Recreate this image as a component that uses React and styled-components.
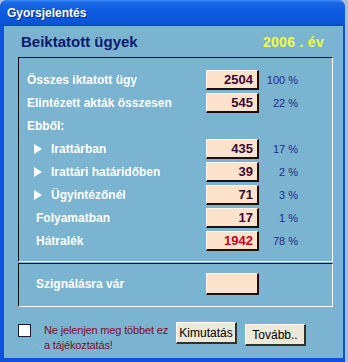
import React from 'react';
import styled, { createGlobalStyle } from 'styled-components';

const GlobalStyle = createGlobalStyle`
  html, body {
    margin: 0;
    padding: 0;
    background: #a9bddc;
  }
  body {
    font-family: "Liberation Sans", Arial, sans-serif;
  }
`;

const Window = styled.div`
  width: 345px;
  height: 362px;
  box-sizing: border-box;
  display: flex;
  flex-direction: column;
  background: #0c52dc;
  border-radius: 7px 7px 0 0;
  overflow: hidden;
`;

const TitleBar = styled.div`
  height: 26px;
  flex: none;
  display: flex;
  align-items: center;
  padding-left: 7px;
  background: linear-gradient(#3b8bf7 0%, #1766e4 12%, #0c5ade 50%, #0a55d8 88%, #0848c6 100%);
  color: #fff;
  font-weight: bold;
  font-size: 12px;
  text-shadow: 1px 1px 0 #0a2f8a;
`;

const Body = styled.div`
  flex: 1;
  margin: 0 2px 4px 4px;
  background: #7ab4d0;
  display: flex;
  flex-direction: column;
`;

const Header = styled.div`
  height: 31px;
  display: flex;
  align-items: center;
  justify-content: space-between;
  padding: 0 19px 0 17px;
`;

const Caption = styled.div`
  color: #0c1a6e;
  font-weight: bold;
  font-size: 15px;
`;

const Year = styled.div`
  color: #f0ff3c;
  font-size: 14px;
  font-weight: bold;
  letter-spacing: 0.3px;
`;

const Frame = styled.div`
  margin: 0 10px 0 14px;
  height: ${p => p.h}px;
  box-sizing: border-box;
  border-top: 1px solid #101018;
  border-left: 1px solid #101018;
  border-right: 1px solid #fff;
  border-bottom: 1px solid #fff;
  padding: ${p => p.pad};
  display: flex;
  flex-direction: column;
  gap: 3px;
  & + & {
    margin-top: 1px;
  }
`;

const Row = styled.div`
  display: grid;
  grid-template-columns: 179px 53px 39px;
  height: 20px;
  align-items: center;
`;

const Label = styled.div`
  display: flex;
  align-items: center;
  padding-left: ${p => p.indent || 0}px;
  color: #fff;
  font-weight: bold;
  font-size: 12px;
`;

const Arrow = styled.svg`
  width: 8px;
  height: 10px;
  margin-right: 9px;
`;

const Box = styled.div`
  height: ${p => p.tall ? 22 : 20}px;
  box-sizing: border-box;
  background: #fde3cc;
  border-top: 1px solid #fff6ee;
  border-left: 1px solid #fff6ee;
  border-right: 2px solid #1a1010;
  border-bottom: 2px solid #1a1010;
  text-align: right;
  padding-right: 4px;
  font-weight: bold;
  font-size: 13px;
  line-height: 18px;
  color: ${p => (p.alert ? '#c8001c' : '#3c0636')};
`;

const Pct = styled.div`
  text-align: right;
  font-size: 11px;
  color: #1b2a84;
`;

const Footer = styled.div`
  flex: 1;
  display: flex;
  align-items: flex-start;
  padding: 16px 0 0 14px;
`;

const Check = styled.div`
  width: 11px;
  height: 11px;
  margin-top: 1px;
  background: #fff;
  border: 1px solid #1a1a2a;
  flex: none;
`;

const Dots = styled.div`
  display: flex;
  flex-direction: column;
  gap: 13px;
  padding: 6px 0 0 4px;
  width: 9px;
  & span {
    width: 2px;
    height: 2px;
    background: #9ab0c8;
  }
`;

const Note = styled.div`
  color: #800a28;
  font-size: 11px;
  letter-spacing: -0.15px;
  line-height: 15px;
  width: 128px;
  white-space: nowrap;
`;

const Button = styled.button`
  margin-left: ${p => p.ml}px;
  margin-top: ${p => p.mt}px;
  width: 61px;
  height: 22px;
  padding: 0;
  background: #ece9d8;
  border-top: 1px solid #fff;
  border-left: 1px solid #fff;
  border-right: 2px solid #303030;
  border-bottom: 2px solid #303030;
  font-family: "Liberation Sans", Arial, sans-serif;
  font-size: 12px;
  color: #000;
`;

const rows = [
  { label: 'Összes iktatott ügy', value: '2504', pct: '100 %' },
  { label: 'Elintézett akták összesen', value: '545', pct: '22 %' },
  { label: 'Ebből:' },
  { label: 'Irattárban', value: '435', pct: '17 %', arrow: true },
  { label: 'Irattári határidőben', value: '39', pct: '2 %', arrow: true },
  { label: 'Ügyintézőnél', value: '71', pct: '3 %', arrow: true },
  { label: 'Folyamatban', value: '17', pct: '1 %', indent: 9 },
  { label: 'Hátralék', value: '1942', pct: '78 %', indent: 9, alert: true },
];

export default function App() {
  return (
    <>
      <GlobalStyle />
      <Window>
        <TitleBar>Gyorsjelentés</TitleBar>
        <Body>
          <Header>
            <Caption>Beiktatott ügyek</Caption>
            <Year>2006 . év</Year>
          </Header>
          <Frame h={205} pad="12px 0 0 8px">
            {rows.map(r => (
              <Row key={r.label}>
                <Label indent={r.arrow ? 7 : r.indent}>
                  {r.arrow && (
                    <Arrow viewBox="0 0 8 10">
                      <polygon points="0,0 8,5 0,10" fill="#fff" />
                    </Arrow>
                  )}
                  {r.label}
                </Label>
                {r.value && <Box alert={r.alert}>{r.value}</Box>}
                {r.pct && <Pct>{r.pct}</Pct>}
              </Row>
            ))}
          </Frame>
          <Frame h={44} pad="9px 0 0 8px">
            <Row>
              <Label indent={9}>Szignálásra vár</Label>
              <Box tall />
            </Row>
          </Frame>
          <Footer>
            <Check />
            <Dots><span /><span /></Dots>
            <Note>Ne jelenjen meg többet ez<br />a tájékoztatás!</Note>
            <Button ml={4} mt={-1}>Kimutatás</Button>
            <Button ml={8} mt={1}>Tovább..</Button>
          </Footer>
        </Body>
      </Window>
    </>
  );
}
